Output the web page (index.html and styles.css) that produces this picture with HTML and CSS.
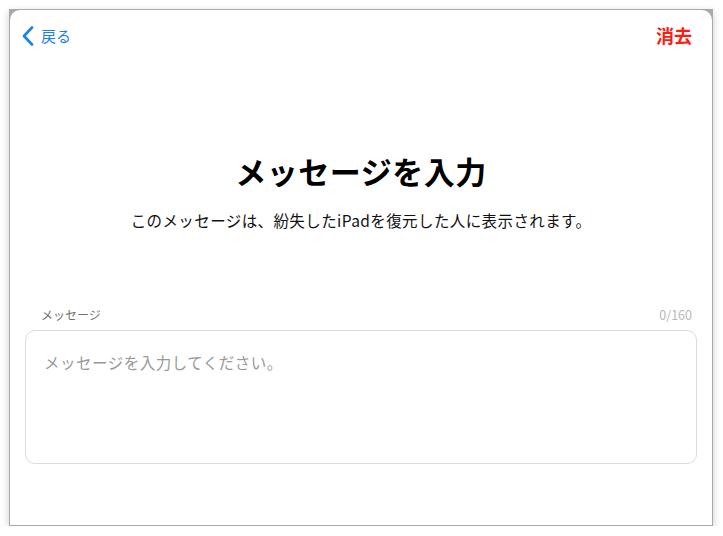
FILE: index.html
```html
<!DOCTYPE html>
<html lang="ja">
<head>
    <meta charset="UTF-8">
    <title>メッセージを入力</title>
    <link rel="stylesheet" href="styles.css">
</head>
<body>
    <div class="frame">
        <div class="screen">
            <header class="nav">
                <a class="back" href="#">
                    <svg width="12" height="20" viewBox="0 0 12 20"><path d="M10 1.5 L2 10 L10 18.5" fill="none" stroke="#1a7ef5" stroke-width="2.6" stroke-linecap="round" stroke-linejoin="round"/></svg>
                    <span>戻る</span>
                </a>
                <a class="clear" href="#">消去</a>
            </header>

            <h1 class="title">メッセージを入力</h1>
            <p class="subtitle">このメッセージは、紛失したiPadを復元した人に表示されます。</p>

            <div class="field-head">
                <span class="field-label">メッセージ</span>
                <span class="counter">0/160</span>
            </div>
            <div class="message-box">
                <span class="placeholder">メッセージを入力してください。</span>
            </div>
        </div>
    </div>
</body>
</html>
```

FILE: styles.css
```css
body {
    margin: 0;
    background-color: #fff;
    font-family: "Noto Sans CJK JP", "Noto Sans", sans-serif;
    color: #000;
}
.frame {
    margin: 9px 0 0 9px;
    width: 704px;
    height: 517px;
    background-color: #a9a9a9;
    padding: 1px;
    box-sizing: border-box;
    box-shadow: 0 3px 8px rgba(0, 0, 0, 0.2);
}
.screen {
    height: 100%;
    background-color: #fff;
    border-radius: 10px 10px 0 0;
}
.nav {
    height: 50px;
    display: flex;
    align-items: center;
    justify-content: space-between;
    padding: 0 20px 0 12px;
}
.back {
    display: flex;
    align-items: center;
    gap: 7px;
    color: #1a7ef5;
    text-decoration: none;
    font-size: 15px;
}
.back svg {
    display: block;
    margin-top: 2px;
}
.clear {
    color: #ff1a12;
    font-weight: bold;
    font-size: 18px;
    text-decoration: none;
    margin-top: -1px;
}
.title {
    margin: 93px 0 0;
    text-align: center;
    font-size: 31px;
    letter-spacing: 0.5px;
    line-height: 36px;
    font-weight: bold;
}
.subtitle {
    margin: 20px 0 0;
    text-align: center;
    font-size: 15.5px;
    letter-spacing: 0.4px;
    line-height: 22px;
    color: #111;
}
.field-head {
    margin-top: 76px;
    display: flex;
    justify-content: space-between;
    padding: 0 20px 0 31px;
    font-size: 12px;
    line-height: 16px;
}
.field-label {
    color: #707070;
}
.counter {
    color: #b8b8b8;
    font-size: 12.5px;
}
.message-box {
    margin: 7px 15px 0;
    height: 134px;
    box-sizing: border-box;
    border: 1px solid #dcdcdc;
    border-radius: 10px;
    padding: 20px 18px;
    font-size: 15.5px;
    letter-spacing: 0.5px;
    line-height: 22px;
}
.placeholder {
    color: #999;
}
```
